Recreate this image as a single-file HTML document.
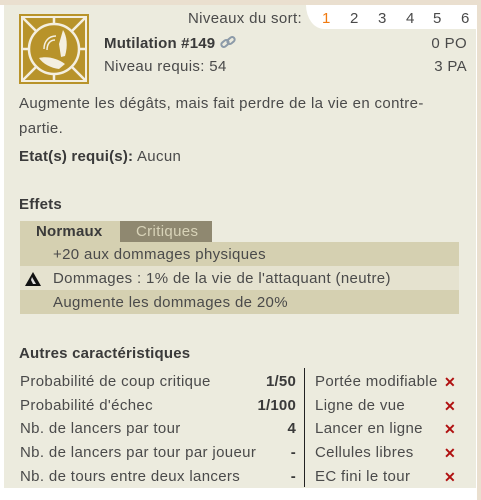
<!DOCTYPE html>
<html><head><meta charset="utf-8"><style>
*{margin:0;padding:0;box-sizing:border-box}
body{width:481px;height:500px;background:#fff;position:relative;overflow:hidden;font-family:"Liberation Sans",sans-serif;font-size:15px;letter-spacing:0.35px;color:#4a4a4a}
.top{position:absolute;left:0;top:0;width:481px;height:5px;background:#eadfcf}
.rb{position:absolute;right:0;top:0;width:4px;height:500px;background:#eadfcf}
.panel{position:absolute;left:4px;top:5px;width:472px;height:483px;background:#ecebde}
.t{position:absolute;white-space:nowrap;line-height:20px}
.b{font-weight:bold;color:#3a3a3a;letter-spacing:0.2px}
.lv{position:absolute;left:306px;top:5px;width:170px;height:24px;background:#fff;border-bottom-left-radius:18px 24px}
.row{position:absolute;left:20px;width:439px;height:24px}
.x{color:#b01010;font-weight:bold;font-size:14px}
</style></head><body>
<div class="top"></div><div class="rb"></div>
<div class="panel"></div>
<div class="lv"></div>
<div class="t" style="left:188px;top:9px">Niveaux du sort:</div>
<div class="t" style="left:322px;top:9px;color:#f07a10">1</div>
<div class="t" style="left:350px;top:9px">2</div>
<div class="t" style="left:378px;top:9px">3</div>
<div class="t" style="left:406px;top:9px">4</div>
<div class="t" style="left:433px;top:9px">5</div>
<div class="t" style="left:461px;top:9px">6</div>
<svg style="position:absolute;left:19px;top:14px" width="70" height="70" viewBox="0 0 70 70">
<rect width="70" height="70" fill="#b8932a"/>
<rect x="3" y="3" width="64" height="64" fill="none" stroke="#f4efe0" stroke-width="2"/>
<g stroke="#f4efe0" stroke-width="2.5" fill="none">
<path d="M3 3L18 18M67 3L52 18M3 67L18 52M67 67L52 52M35 3V10M35 60V67M3 35H10M60 35H67"/>
<circle cx="35" cy="35" r="25"/>
</g>
<circle cx="35" cy="35" r="22" fill="#b8932a"/>
<g fill="#f4efe0">
<path d="M44 16C48 22 49 32 46 42L42 43L40 30Z"/>
<path d="M20 44C28 42 38 44 46 50L40 55C32 54 24 50 20 44Z"/>
</g>
<path d="M25 35C25 27 30 22 37 22M28 36C28 30 31 26 36 26" stroke="#f4efe0" stroke-width="1.5" fill="none"/>
</svg>
<div class="t b" style="left:104px;top:34px">Mutilation #149 <svg width="16" height="14" viewBox="0 0 16 14" style="vertical-align:-1px"><g fill="none" stroke="#8c9aa8" stroke-width="2"><rect x="1" y="6" width="8" height="5" rx="2.5" transform="rotate(-40 5 8.5)"/><rect x="7" y="3" width="8" height="5" rx="2.5" transform="rotate(-40 11 5.5)"/></g></svg></div>
<div class="t" style="left:104px;top:57px">Niveau requis: 54</div>
<div class="t" style="right:14px;top:34px">0 PO</div>
<div class="t" style="right:14px;top:57px">3 PA</div>
<div class="t" style="left:19px;top:94px">Augmente les dégâts, mais fait perdre de la vie en contre-</div>
<div class="t" style="left:19px;top:119px">partie.</div>
<div class="t" style="left:19px;top:147px"><span class="b">Etat(s) requi(s):</span> Aucun</div>
<div class="t b" style="left:19px;top:195px">Effets</div>
<div style="position:absolute;left:20px;top:221px;width:100px;height:21px;background:#d5d0b1"></div>
<div style="position:absolute;left:120px;top:221px;width:92px;height:21px;background:#8f8870"></div>
<div class="t b" style="left:36px;top:222px">Normaux</div>
<div class="t" style="left:136px;top:222px;color:#d8d3b8">Critiques</div>
<div class="row" style="top:242px;background:#d5d0b1"></div>
<div class="row" style="top:266px;background:#e5e2cf"></div>
<div class="row" style="top:290px;background:#d5d0b1"></div>
<div class="t" style="left:53px;top:245px">+20 aux dommages physiques</div>
<svg style="position:absolute;left:24px;top:271px" width="18" height="16" viewBox="0 0 18 16"><path d="M9 1L17 15H1Z" fill="#111"/><path d="M8 6L12 13L9 13L7 9Z" fill="#ddd"/></svg>
<div class="t" style="left:53px;top:269px">Dommages : 1% de la vie de l'attaquant (neutre)</div>
<div class="t" style="left:53px;top:293px">Augmente les dommages de 20%</div>
<div class="t b" style="left:19px;top:344px">Autres caractéristiques</div>
<div style="position:absolute;left:304px;top:368px;width:1px;height:119px;background:#222"></div>
<div class="t" style="left:20px;top:372px">Probabilité de coup critique</div>
<div class="t" style="left:20px;top:396px">Probabilité d'échec</div>
<div class="t" style="left:20px;top:419px">Nb. de lancers par tour</div>
<div class="t" style="left:20px;top:443px">Nb. de lancers par tour par joueur</div>
<div class="t" style="left:20px;top:467px">Nb. de tours entre deux lancers</div>
<div class="t b" style="right:185px;top:372px">1/50</div>
<div class="t b" style="right:185px;top:396px">1/100</div>
<div class="t b" style="right:185px;top:419px">4</div>
<div class="t b" style="right:185px;top:443px">-</div>
<div class="t b" style="right:185px;top:467px">-</div>
<div class="t" style="left:315px;top:372px">Portée modifiable</div>
<div class="t" style="left:315px;top:396px">Ligne de vue</div>
<div class="t" style="left:315px;top:419px">Lancer en ligne</div>
<div class="t" style="left:315px;top:443px">Cellules libres</div>
<div class="t" style="left:315px;top:467px">EC fini le tour</div>
<div class="t x" style="left:444px;top:372px">✕</div>
<div class="t x" style="left:444px;top:396px">✕</div>
<div class="t x" style="left:444px;top:419px">✕</div>
<div class="t x" style="left:444px;top:443px">✕</div>
<div class="t x" style="left:444px;top:467px">✕</div>
</body></html>
